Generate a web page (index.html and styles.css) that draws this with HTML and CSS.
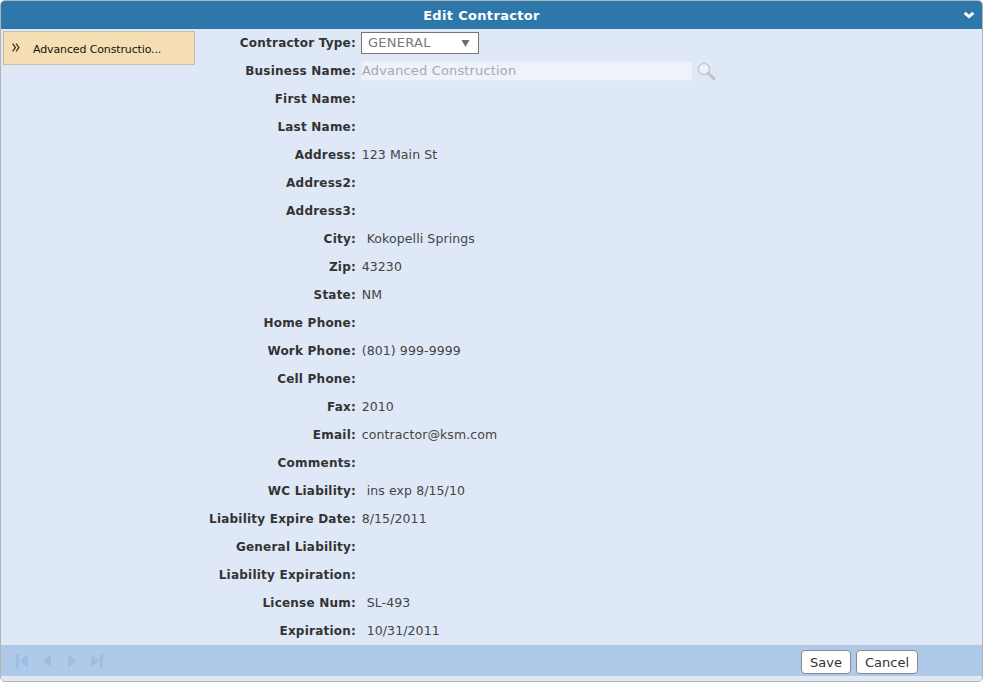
FILE: index.html
```html
<!DOCTYPE html>
<html lang="en">
<head>
<meta charset="utf-8">
<title>Edit Contractor</title>
<link rel="stylesheet" href="styles.css">
</head>
<body>
<div class="window">
  <header class="titlebar">
    <span class="title">Edit Contractor</span>
    <svg class="collapse" width="12" height="8" viewBox="0 0 12 8"><path d="M1.6 1.8 L6 5.6 L10.4 1.8" fill="none" stroke="#fff" stroke-width="3"/></svg>
  </header>
  <main class="content">
    <aside class="sidebar">
      <div class="side-item">
        <svg class="chev" width="8" height="9" viewBox="0 0 8 9"><path d="M0.7 0.7 L3.4 4.5 L0.7 8.3 M4.2 0.7 L6.9 4.5 L4.2 8.3" fill="none" stroke="#3a3a3a" stroke-width="1.3"/></svg>
        <span class="side-text">Advanced Constructio...</span>
      </div>
    </aside>
    <div class="form">
      <div class="row"><label>Contractor Type:</label>
        <div class="select"><span>GENERAL</span><svg width="9" height="8" viewBox="0 0 9 8"><path d="M0.5 1 H8.5 L4.5 8 Z" fill="#6e6e6e"/></svg></div>
      </div>
      <div class="row"><label>Business Name:</label>
        <div class="textbox">Advanced Construction</div>
        <svg class="search" width="20" height="20" viewBox="0 0 20 20"><circle cx="8" cy="8" r="5.6" fill="#eef3fa" stroke="#c3ccd6" stroke-width="1.6"/><path d="M12.5 12.5 L18 17.6" stroke="#bcc5cf" stroke-width="3" stroke-linecap="round"/></svg>
      </div>
      <div class="row"><label>First Name:</label></div>
      <div class="row"><label>Last Name:</label></div>
      <div class="row"><label>Address:</label><span class="val">123 Main St</span></div>
      <div class="row"><label>Address2:</label></div>
      <div class="row"><label>Address3:</label></div>
      <div class="row"><label>City:</label><span class="val inset">Kokopelli Springs</span></div>
      <div class="row"><label>Zip:</label><span class="val">43230</span></div>
      <div class="row"><label>State:</label><span class="val">NM</span></div>
      <div class="row"><label>Home Phone:</label></div>
      <div class="row"><label>Work Phone:</label><span class="val">(801) 999-9999</span></div>
      <div class="row"><label>Cell Phone:</label></div>
      <div class="row"><label>Fax:</label><span class="val">2010</span></div>
      <div class="row"><label>Email:</label><span class="val">contractor@ksm.com</span></div>
      <div class="row"><label>Comments:</label></div>
      <div class="row"><label>WC Liability:</label><span class="val inset">ins exp 8/15/10</span></div>
      <div class="row"><label>Liability Expire Date:</label><span class="val">8/15/2011</span></div>
      <div class="row"><label>General Liability:</label></div>
      <div class="row"><label>Liability Expiration:</label></div>
      <div class="row"><label>License Num:</label><span class="val inset">SL-493</span></div>
      <div class="row"><label>Expiration:</label><span class="val inset">10/31/2011</span></div>
    </div>
  </main>
  <footer class="toolbar">
    <div class="pager">
      <svg width="16" height="16" viewBox="0 0 16 16"><path d="M2 1h3v14H2z M14 1v14L6 8z"/></svg>
      <svg width="16" height="16" viewBox="0 0 16 16"><path d="M12 1v14L4 8z"/></svg>
      <svg width="16" height="16" viewBox="0 0 16 16"><path d="M4 1v14l8-7z"/></svg>
      <svg width="16" height="16" viewBox="0 0 16 16"><path d="M2 1v14l8-7z M11 1h3v14h-3z"/></svg>
    </div>
    <div class="actions">
      <button class="btn" type="button">Save</button>
      <button class="btn" type="button">Cancel</button>
    </div>
  </footer>
</div>
</body>
</html>
```
FILE: styles.css
```css
* { box-sizing: border-box; }
html, body { margin: 0; height: 100%; }
body { font-family: "DejaVu Sans", sans-serif; font-size: 12px; color: #333; background: #fff; }
.window {
  width: 983px; height: 682px; display: flex; flex-direction: column;
  background: #dfe8f6; border: 1px solid #b4b4b4; border-radius: 5px; overflow: hidden;
}
.titlebar {
  height: 28px; flex: none; background: #2e77ab; display: flex; align-items: center; justify-content: center;
  position: relative; color: #fff; padding-right: 20px;
}
.title { font-weight: bold; font-size: 13px; letter-spacing: 0.33px; }
.collapse { position: absolute; right: 7px; top: 10px; }
.content { flex: 1; display: flex; min-height: 0; }
.sidebar { width: 194px; flex: none; padding: 2px 0 0 2px; }
.side-item {
  height: 34px; width: 192px; background: #f5deb3; border: 1px solid #c4c0b0;
  display: flex; align-items: center; color: #111; font-size: 11px; letter-spacing: -0.13px;
}
.chev { margin-left: 8px; margin-right: 13px; margin-bottom: 2px; }
.side-text { margin-top: 2px; }
.form { flex: 1; }
.row { height: 28px; display: flex; align-items: center; }
.row label { width: 161px; font-weight: bold; flex: none; white-space: nowrap; display: flex; justify-content: flex-end; letter-spacing: 0.22px; }
.val { margin: 0 0 2px 5.7px; white-space: nowrap; font-size: 12.5px; letter-spacing: 0.1px; color: #444; }
.val.inset { margin-left: 10.7px; }
.select {
  margin-left: 5px; width: 118px; height: 22px; border: 1px solid #767676; background: #fff; color: #777;
  display: flex; align-items: center; justify-content: space-between; padding: 0 8px 2px 6px; font-size: 13px; letter-spacing: 0.25px;
}
.select svg { margin-top: 2px; }
.textbox {
  margin-left: 5px; width: 332px; height: 20px; background: #edf2fb; border: 1px solid #e6ecf6;
  color: #a9a9a9; padding: 0 0 2px; display: flex; align-items: center; font-size: 13px; letter-spacing: 0.15px;
}
.search { margin-left: 3px; }
.toolbar {
  height: 31px; margin-bottom: 5px; flex: none; background: #aecae8; display: flex; align-items: center;
  justify-content: space-between; padding: 0 64px 0 13px;
}
.pager { display: flex; gap: 9px; fill: #9dbde2; }
.actions { display: flex; gap: 5px; padding-top: 3px; }
.btn {
  height: 24px; padding: 0 8px; border: 1px solid #8a8a8a; border-radius: 4px; background: #fff; color: #333;
  font-family: inherit; font-size: 13px;
}
```
